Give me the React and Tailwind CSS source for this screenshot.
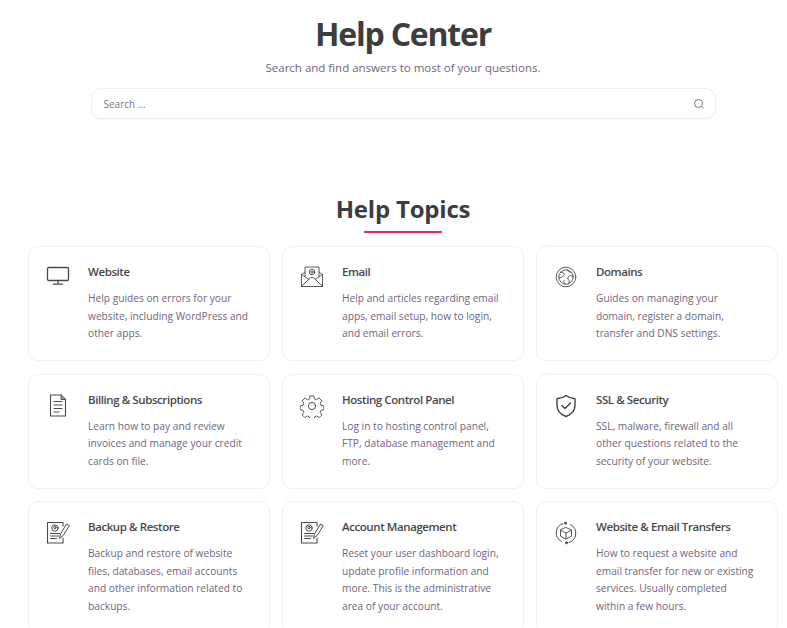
import React from "react";

const S = { fill: "none", stroke: "#4a4a4a", strokeWidth: 1.1, strokeLinecap: "round", strokeLinejoin: "round" };

function Monitor() {
  return (
    <svg width="24" height="20" viewBox="0 0 24 20" {...S}>
      <rect x="1.5" y="1.5" width="21" height="13" rx="1.2" strokeWidth="1.3" />
      <path d="M12 14.5v3.5M7.5 18.2h9" strokeWidth="1.3" />
    </svg>
  );
}
function Mail() {
  return (
    <svg width="24" height="22" viewBox="0 0 24 22" {...S} strokeWidth="0.9">
      <path d="M1.5 8.5v12h21v-12" />
      <path d="M1.5 8.5 5 6M22.5 8.5 19 6" />
      <path d="M5 10.5V1h14v9.5" />
      <path d="M1.5 20.5 9.5 12.5c1.5-1.3 3.5-1.3 5 0l8 8" />
      <path d="M1.5 8.5 9 13.5M22.5 8.5 15 13.5" />
      <circle cx="12" cy="6" r="2.8" />
      <circle cx="12" cy="6" r="1.1" />
    </svg>
  );
}
function Globe() {
  return (
    <svg width="22" height="22" viewBox="0 0 22 22" {...S} strokeWidth="0.9">
      <circle cx="11" cy="11" r="9.8" />
      <circle cx="11" cy="11" r="7.2" />
      <path d="M6 6c1.5 1 3 .8 3.5 2.2S7.8 10 6.8 11s-2.4.8-3 .5M12 4c.5 1.5 2.5 1.4 3.6 2.2M18 10c-1.6-.5-3.4-.8-4.5.4s-.7 2.7.2 3.6.5 2.4-.2 3.5M10 18c-.8-1.2-1.5-2-1-3.4" />
    </svg>
  );
}
function Doc() {
  return (
    <svg width="18" height="23" viewBox="0 0 18 23" {...S}>
      <path d="M1.5 1h10.5l4.5 4.5V22h-15z" strokeWidth="1.1" />
      <path d="M12 1v4.5h4.5" fill="#9a9aa5" strokeWidth="0.9" />
      <path d="M5 7.5h8M5 11h8M5 14.5h8M5 18h5" strokeWidth="1" />
    </svg>
  );
}
function Gear() {
  return (
    <svg width="24" height="24" viewBox="0 0 24 24" {...S} strokeWidth="0.95">
      <circle cx="12" cy="12" r="3.6" />
      <path d="M10 1.500h4l.6 3 2.200.9 2.600-1.700 2.800 2.800-1.700 2.600.9 2.200 3 .6v4l-3 .6-.9 2.200 1.700 2.600-2.800 2.800-2.600-1.700-2.200.9-.6 3h-4l-.6-3-2.200-.9-2.600 1.700-2.800-2.800 1.700-2.600-.9-2.200-3-.6v-4l3-.6.9-2.200-1.700-2.600 2.800-2.800 2.600 1.700 2.200-.9z" transform="translate(.5 .500) scale(.96)" />
    </svg>
  );
}
function Shield() {
  return (
    <svg width="22" height="24" viewBox="0 0 22 24" {...S} stroke="#3f3f4a" strokeWidth="1.4">
      <path d="M11 1.5c2.5 2 5.5 3 9 3.2V11c0 5.5-3.5 9.500-9 11.500C5.500 20.500 2 16.500 2 11V4.700c3.500-.2 6.500-1.200 9-3.200z" />
      <path d="m7 11.500 3 3 5.500-5.500" />
    </svg>
  );
}
function Contract() {
  return (
    <svg width="24" height="24" viewBox="0 0 24 24" {...S} strokeWidth="1">
      <path d="M17 5V1.500H1.500V22H17v-5" strokeWidth="1.100" />
      <circle cx="9" cy="7" r="3.200" />
      <circle cx="9" cy="6.500" r="1.200" />
      <path d="M4.500 12.500h9M4.500 15h8M4.500 17.500h6" />
      <path d="M23 4.500 20.500 3 14.500 13l-1 4.500 3.500-3z" />
    </svg>
  );
}
function Transfer() {
  return (
    <svg width="22" height="24" viewBox="0 0 22 24" {...S} strokeWidth="0.95">
      <path d="M8 2.500a9.800 9.800 0 0 0-1.500 18M14 21.500a9.800 9.800 0 0 0 1.500-18" />
      <circle cx="10.500" cy="2.200" r="1" fill="#4a4a4a" />
      <circle cx="11.500" cy="21.800" r="1" fill="#4a4a4a" />
      <path d="m11 6.500 5.500 2.700v6L11 18l-5.500-2.800v-6zM5.500 9.200 11 12l5.500-2.800M11 12v6" />
    </svg>
  );
}

const topics = [
  { I: Monitor, t: "Website", d: ["Help guides on errors for your", "website, including WordPress and", "other apps."] },
  { I: Mail, t: "Email", d: ["Help and articles regarding email", "apps, email setup, how to login,", "and email errors."] },
  { I: Globe, t: "Domains", d: ["Guides on managing your", "domain, register a domain,", "transfer and DNS settings."] },
  { I: Doc, t: "Billing & Subscriptions", d: ["Learn how to pay and review", "invoices and manage your credit", "cards on file."] },
  { I: Gear, t: "Hosting Control Panel", d: ["Log in to hosting control panel,", "FTP, database management and", "more."] },
  { I: Shield, t: "SSL & Security", d: ["SSL, malware, firewall and all", "other questions related to the", "security of your website."] },
  { I: Contract, t: "Backup & Restore", d: ["Backup and restore of website", "files, databases, email accounts", "and other information related to", "backups."] },
  { I: Contract, t: "Account Management", d: ["Reset your user dashboard login,", "update profile information and", "more. This is the administrative", "area of your account."] },
  { I: Transfer, t: "Website & Email Transfers", d: ["How to request a website and", "email transfer for new or existing", "services. Usually completed", "within a few hours."] },
];

export default function App() {
  return (
    <div className="h-[628px] overflow-hidden bg-white pl-7 pr-[9px] font-['Open_Sans',sans-serif]">
      <header className="flex flex-col items-center pt-[13px]">
        <h1 className="text-[32px] leading-[42px] font-bold tracking-[-1.2px] text-[#3d3d3d]">Help Center</h1>
        <p className="mt-[4px] text-[11.500px] leading-[18px] text-[#6f6480]">Search and find answers to most of your questions.</p>
        <div className="mt-[11px] flex h-[31px] w-[625px] items-center justify-between rounded-[10px] border border-[#eeeeee] pt-px pr-[10px] pl-3 shadow-[0_1px_2px_rgba(0,0,0,0.03)]">
          <span className="text-[10px] text-[#777777]">Search ...</span>
          <svg width="12" height="12" viewBox="0 0 12 12" fill="none" stroke="#777777" strokeWidth="1">
            <circle cx="5.500" cy="5.500" r="4" />
            <path d="m8.500 8.500 2 2" />
          </svg>
        </div>
      </header>
      <section className="mt-[74px] flex flex-col items-center">
        <h2 className="text-[24px] leading-[32px] font-bold tracking-[-0.2px] text-[#3d3d3d]">Help Topics</h2>
        <div className="mt-[6px] h-0.5 w-[78px] bg-[#f0246e]" />
      </section>
      <div className="mt-[13px] grid grid-cols-3 gap-x-3 gap-y-[12.500px]">
        {topics.map(({ I, t, d }) => (
          <article key={t} className="flex rounded-[10px] border border-[#f0f0f0] pt-[16px] pb-[17.500px]">
            <div className="flex w-[59px] shrink-0 justify-center pt-[3px] pr-[2px]">
              <I />
            </div>
            <div>
              <h3 className="text-[11.500px] leading-[18px] font-semibold tracking-[-0.42px] text-[#474747]">{t}</h3>
              <p className="mt-[9px] text-[10.200px] leading-[17.500px] whitespace-nowrap text-[#6f6480]">
                {d.map((l) => (
                  <span key={l} className="block">{l}</span>
                ))}
              </p>
            </div>
          </article>
        ))}
      </div>
    </div>
  );
}
